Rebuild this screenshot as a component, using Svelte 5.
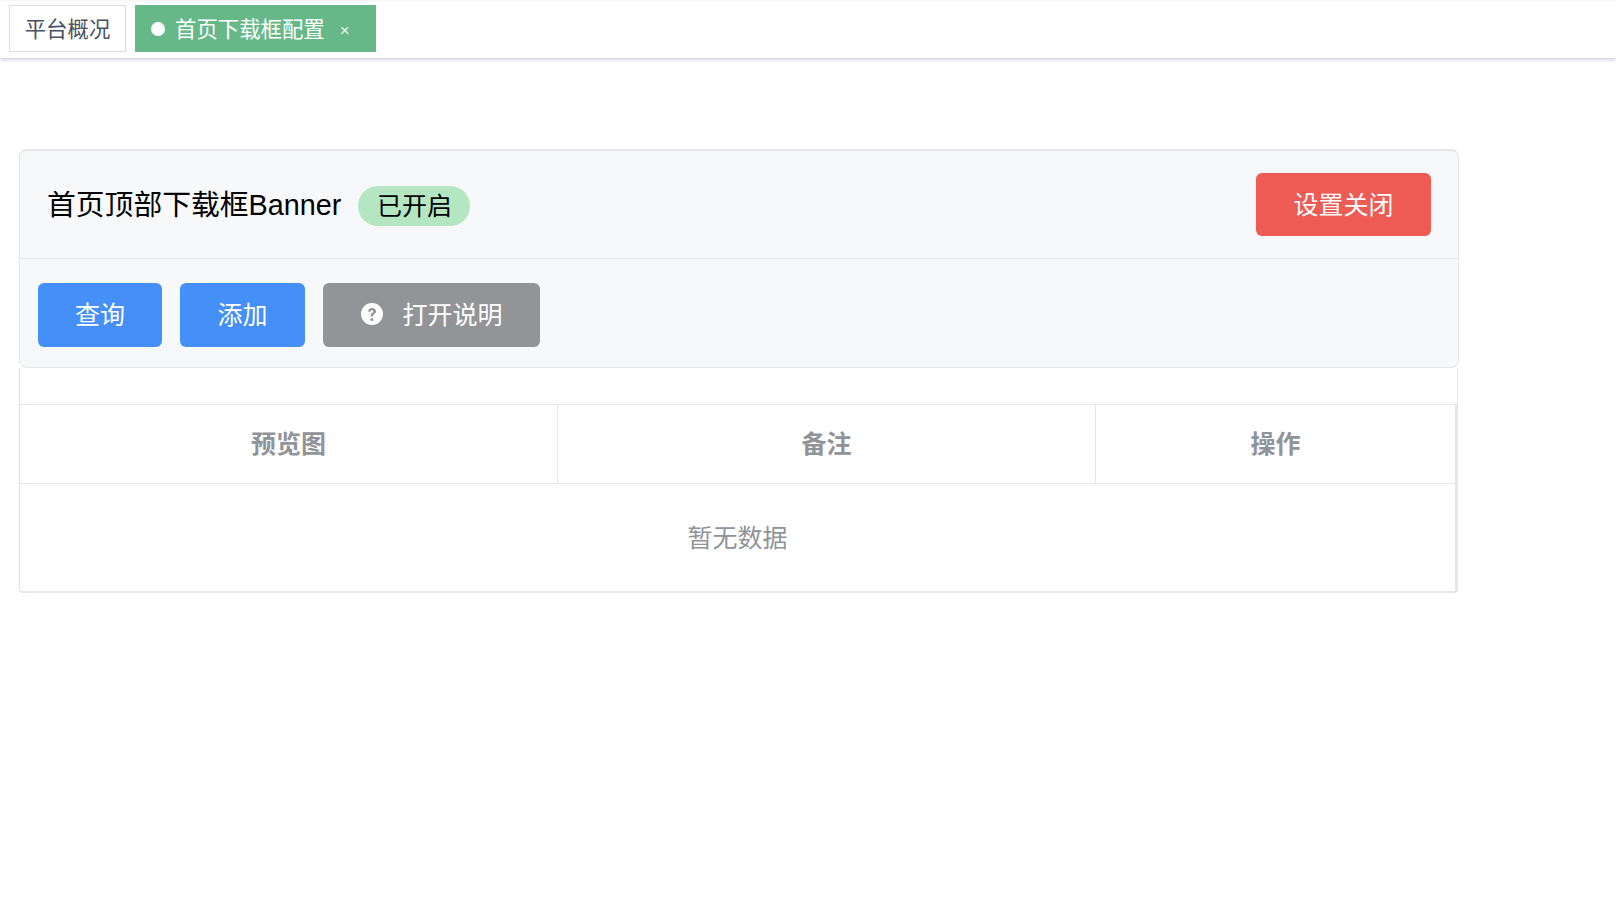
<script>
  const tabs = [
    { label: "平台概况", active: false },
    { label: "首页下载框配置", active: true }
  ];
  const columns = [
    { label: "预览图", width: 538 },
    { label: "备注", width: 538 },
    { label: "操作", width: 361 }
  ];
</script>

<div class="tabsBar">
  {#each tabs as tab}
    <div class="tab" class:active={tab.active}>
      {#if tab.active}<span class="dot"></span>{/if}
      <span class="label">{tab.label}</span>
      {#if tab.active}<span class="close">×</span>{/if}
    </div>
  {/each}
</div>

<div class="page">
  <div class="panel">
    <div class="panelHead">
      <div class="title">
        <span class="titleText">首页顶部下载框Banner</span>
        <span class="badge">已开启</span>
      </div>
      <button class="btn red">设置关闭</button>
    </div>
    <div class="toolbar">
      <button class="btn blue">查询</button>
      <button class="btn blue add">添加</button>
      <button class="btn grey">
        <svg width="22" height="22" viewBox="0 0 22 22">
          <circle cx="11" cy="11" r="11" fill="#fff" />
          <path d="M7.2 8.7c.1-2.3 1.7-3.8 3.9-3.8s3.9 1.4 3.9 3.4c0 1.4-.8 2.2-1.9 2.9-.9.6-1.1 1-1.1 1.9v.4H9.6v-.6c0-1.5.5-2.3 1.6-3 .8-.5 1.1-.9 1.1-1.5s-.5-1.1-1.3-1.1-1.3.5-1.4 1.4z" fill="#939497" />
          <circle cx="10.9" cy="16.6" r="1.5" fill="#939497" />
        </svg>
        <span>打开说明</span>
      </button>
    </div>
  </div>
  <div class="tableWrap">
    <table>
      <thead>
        <tr>
          {#each columns as col}
            <th style="width: {col.width}px">{col.label}</th>
          {/each}
        </tr>
      </thead>
      <tbody>
        <tr>
          <td colspan="3">暂无数据</td>
        </tr>
      </tbody>
    </table>
  </div>
</div>

<style>
  :global(body) {
    background: #fff;
    font-family: "Liberation Sans", "Noto Sans CJK SC", sans-serif;
  }
  .tabsBar {
    display: flex;
    gap: 9px;
    height: 58px;
    box-sizing: border-box;
    padding: 5px 9px 0;
    background: #fff;
    box-shadow: 0 1px 4px rgba(40, 40, 90, 0.3), inset 0 3px 3px -2px rgba(0, 0, 0, 0.05);
  }
  .tab {
    display: flex;
    align-items: center;
    justify-content: center;
    width: 117px;
    height: 47px;
    box-sizing: border-box;
    border: 1px solid #d8dce5;
    font-size: 21.4px;
    color: #495060;
    background: #fff;
  }
  .tab.active {
    justify-content: flex-start;
    width: 241px;
    padding-left: 15px;
    background: #67b888;
    border-color: #67b888;
    color: #fff;
  }
  .label {
    position: relative;
    top: -1px;
  }
  .dot {
    width: 14px;
    height: 14px;
    border-radius: 50%;
    background: #fff;
    margin: 1px 10px 0 0;
  }
  .close {
    margin: 3px 0 0 13px;
    font-size: 17px;
    line-height: 1;
    opacity: 0.85;
    width: 14px;
    text-align: center;
  }
  .page {
    padding: 91px 0 0 19px;
    width: 1440px;
  }
  .panel {
    background: #f7f8fa;
    border: 1px solid #e4e5e8;
    border-top-width: 2px;
    border-radius: 8px;
    box-sizing: border-box;
    height: 219px;
  }
  .panelHead {
    display: flex;
    align-items: center;
    justify-content: space-between;
    height: 108px;
    box-sizing: border-box;
    padding: 0 27px;
    border-bottom: 1px solid #e4e5e8;
  }
  .title {
    display: flex;
    align-items: center;
    gap: 17px;
    font-size: 28.8px;
    color: #000;
  }
  .titleText {
    position: relative;
    top: -2px;
  }
  .badge {
    display: inline-block;
    width: 112px;
    height: 40px;
    line-height: 40px;
    border-radius: 20px;
    background: #b5e6c2;
    text-align: center;
    font-size: 25px;
    margin-top: 2px;
  }
  .toolbar {
    display: flex;
    gap: 18px;
    padding: 24px 0 0 18px;
  }
  .btn {
    display: flex;
    align-items: center;
    justify-content: center;
    height: 64px;
    width: 124px;
    border: 0;
    padding: 0 0 4px;
    border-radius: 6px;
    color: #fff;
    font-family: inherit;
    font-size: 25px;
  }
  .blue {
    background: #458ff8;
  }
  .add {
    width: 125px;
  }
  .grey {
    width: 217px;
    gap: 19px;
    padding-left: 1px;
    background: #939497;
  }
  .grey svg {
    position: relative;
    top: 1px;
  }
  .red {
    width: 175px;
    height: 63px;
    background: #ee5a54;
  }
  .tableWrap {
    box-sizing: border-box;
    width: 1439px;
    padding-top: 36px;
    border-right: 1px solid #e4e5e8;
    border-left: 1px solid #e0e2ea;
    border-bottom: 2px solid #e4e7ef;
    border-radius: 0 0 4px 4px;
  }
  table {
    width: 1437px;
    table-layout: fixed;
    border-collapse: separate;
    border-spacing: 0;
  }
  th {
    box-sizing: border-box;
    height: 80px;
    padding: 0 0 5px;
    border-top: 1px solid #e4e7ed;
    border-right: 1px solid #e4e7ed;
    border-bottom: 1px solid #e4e7ed;
    font-size: 25px;
    font-weight: 700;
    color: #909399;
  }
  th:last-child {
    border-right: 2px solid #e4e7ef;
  }
  td {
    box-sizing: border-box;
    height: 107px;
    padding: 0 0 3px;
    border-right: 2px solid #e4e7ef;
    text-align: center;
    font-size: 25px;
    color: #909399;
  }
</style>
